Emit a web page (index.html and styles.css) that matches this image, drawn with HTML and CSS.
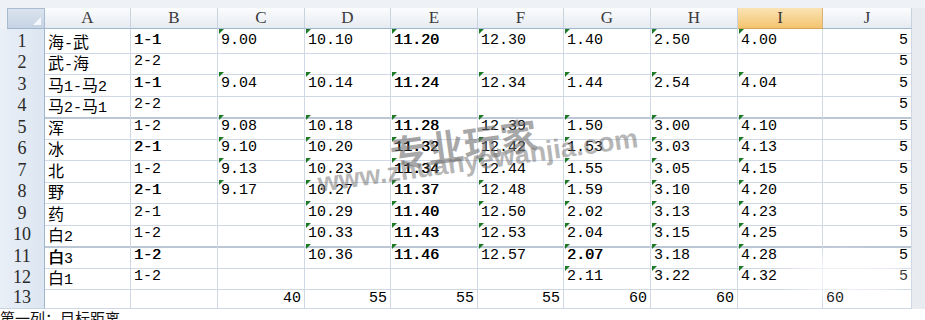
FILE: index.html
```html
<!DOCTYPE html>
<html lang="zh">
<head>
<meta charset="utf-8">
<link rel="stylesheet" href="styles.css">
</head>
<body>
<div class="sheet">
  <div class="topstrip"></div>
  <div class="row hdr">
    <div class="cornercell"><div class="corner"></div></div>
    <div class="ch">A</div><div class="ch">B</div><div class="ch">C</div><div class="ch">D</div><div class="ch">E</div><div class="ch">F</div><div class="ch">G</div><div class="ch">H</div><div class="ch sel">I</div><div class="ch">J</div><div class="gx"></div>
  </div>

  <div class="row t">
    <div class="rh">1</div>
    <div class="c"><span class="cj">海</span>-<span class="cj">武</span></div><div class="c b">1-1</div>
    <div class="c g">9.00</div><div class="c g">10.10</div><div class="c g b">11.20</div><div class="c g">12.30</div><div class="c g">1.40</div><div class="c g">2.50</div><div class="c g">4.00</div><div class="c r">5</div><div class="gx"></div>
  </div>
  <div class="row">
    <div class="rh">2</div>
    <div class="c"><span class="cj">武</span>-<span class="cj">海</span></div><div class="c">2-2</div>
    <div class="c"></div><div class="c"></div><div class="c"></div><div class="c"></div><div class="c"></div><div class="c"></div><div class="c"></div><div class="c r">5</div><div class="gx"></div>
  </div>
  <div class="row t">
    <div class="rh">3</div>
    <div class="c"><span class="cj">马</span>1-<span class="cj">马</span>2</div><div class="c b">1-1</div>
    <div class="c g">9.04</div><div class="c g">10.14</div><div class="c g b">11.24</div><div class="c g">12.34</div><div class="c g">1.44</div><div class="c g">2.54</div><div class="c g">4.04</div><div class="c r">5</div><div class="gx"></div>
  </div>
  <div class="row pb">
    <div class="rh">4</div>
    <div class="c"><span class="cj">马</span>2-<span class="cj">马</span>1</div><div class="c">2-2</div>
    <div class="c"></div><div class="c"></div><div class="c"></div><div class="c"></div><div class="c"></div><div class="c"></div><div class="c"></div><div class="c r">5</div><div class="gx"></div>
  </div>
  <div class="row t">
    <div class="rh">5</div>
    <div class="c"><span class="cj">浑</span></div><div class="c">1-2</div>
    <div class="c g">9.08</div><div class="c g">10.18</div><div class="c g b">11.28</div><div class="c g">12.39</div><div class="c g">1.50</div><div class="c g">3.00</div><div class="c g">4.10</div><div class="c r">5</div><div class="gx"></div>
  </div>
  <div class="row">
    <div class="rh">6</div>
    <div class="c"><span class="cj">冰</span></div><div class="c b">2-1</div>
    <div class="c g">9.10</div><div class="c g">10.20</div><div class="c g b">11.32</div><div class="c g">12.42</div><div class="c g">1.53</div><div class="c g">3.03</div><div class="c g">4.13</div><div class="c r">5</div><div class="gx"></div>
  </div>
  <div class="row t">
    <div class="rh">7</div>
    <div class="c"><span class="cj">北</span></div><div class="c">1-2</div>
    <div class="c g">9.13</div><div class="c g">10.23</div><div class="c g b">11.34</div><div class="c g">12.44</div><div class="c g">1.55</div><div class="c g">3.05</div><div class="c g">4.15</div><div class="c r">5</div><div class="gx"></div>
  </div>
  <div class="row">
    <div class="rh">8</div>
    <div class="c"><span class="cj">野</span></div><div class="c b">2-1</div>
    <div class="c g">9.17</div><div class="c g">10.27</div><div class="c g b">11.37</div><div class="c g">12.48</div><div class="c g">1.59</div><div class="c g">3.10</div><div class="c g">4.20</div><div class="c r">5</div><div class="gx"></div>
  </div>
  <div class="row t">
    <div class="rh">9</div>
    <div class="c"><span class="cj">药</span></div><div class="c">2-1</div>
    <div class="c"></div><div class="c g">10.29</div><div class="c g b">11.40</div><div class="c g">12.50</div><div class="c g">2.02</div><div class="c g">3.13</div><div class="c g">4.23</div><div class="c r">5</div><div class="gx"></div>
  </div>
  <div class="row pb">
    <div class="rh">10</div>
    <div class="c"><span class="cj">白</span>2</div><div class="c">1-2</div>
    <div class="c"></div><div class="c g">10.33</div><div class="c g b">11.43</div><div class="c g">12.53</div><div class="c g">2.04</div><div class="c g">3.15</div><div class="c g">4.25</div><div class="c r">5</div><div class="gx"></div>
  </div>
  <div class="row t">
    <div class="rh">11</div>
    <div class="c"><span class="cj b">白</span>3</div><div class="c b">1-2</div>
    <div class="c"></div><div class="c g">10.36</div><div class="c g b">11.46</div><div class="c g">12.57</div><div class="c g b">2.07</div><div class="c g">3.18</div><div class="c g">4.28</div><div class="c r">5</div><div class="gx"></div>
  </div>
  <div class="row">
    <div class="rh">12</div>
    <div class="c"><span class="cj">白</span>1</div><div class="c">1-2</div>
    <div class="c"></div><div class="c"></div><div class="c"></div><div class="c"></div><div class="c g">2.11</div><div class="c g">3.22</div><div class="c g">4.32</div><div class="c r">5</div><div class="gx"></div>
  </div>
  <div class="row t">
    <div class="rh">13</div>
    <div class="c"></div><div class="c"></div>
    <div class="c r">40</div><div class="c r">55</div><div class="c r">55</div><div class="c r">55</div><div class="c r">60</div><div class="c r">60</div><div class="c"></div><div class="c top">60</div><div class="gx"></div>
  </div>

  <div class="smudge"></div>
  <div class="wm">专业玩家</div>
  <div class="wm2">www.zhuanyewanjia.com</div>
</div>
<div class="note">第一列：目标距离</div>
</body>
</html>
```
FILE: styles.css
```css
html, body {
  margin: 0;
  padding: 0;
}
body {
  width: 925px;
  height: 320px;
  overflow: hidden;
  background: #ffffff;
  font-family: "Liberation Mono", "Noto Sans CJK SC", monospace;
  color: #000;
}
.sheet {
  position: relative;
}
.topstrip {
  height: 8px;
  background: #eef1f5;
}
.row {
  display: grid;
  grid-template-columns: 45px 86px 87px 87px 86px 87px 86px 87px 87px 85px 89px 13px;
  height: 21px;
}
.row.t {
  height: 22px;
}
.cornercell {
  background: #eef1f5;
  display: flex;
}
.corner {
  position: relative;
  margin-left: 7px;
  flex: 1;
  background: linear-gradient(#dbe4ef, #c6d3e3);
  border: 1px solid #a9bbd0;
  border-bottom-color: #9eb6ce;
}
.corner::after {
  content: "";
  position: absolute;
  right: 3px;
  bottom: 3px;
  border-left: 8px solid transparent;
  border-bottom: 8px solid #f4f7fb;
}
.ch {
  background: linear-gradient(#fbfcfd, #e6ebf1);
  border-right: 1px solid #c9d3df;
  border-bottom: 1px solid #9eb6ce;
  display: flex;
  align-items: center;
  justify-content: center;
  font-family: "Liberation Serif", serif;
  font-size: 17px;
  color: #3a3a3a;
  box-sizing: border-box;
}
.ch.sel {
  background: linear-gradient(#fbe3b4, #f3c470);
  border-bottom-color: #d7a35b;
  border-right-color: #d9b27a;
}
.gx {
  background: #e8ebf0;
}
.rh {
  background: linear-gradient(90deg, #e9eff7, #dde6f1);
  border-right: 1px solid #9eb6ce;
  border-bottom: 1px solid #c5d2e2;
  display: flex;
  align-items: center;
  justify-content: center;
  font-family: "Liberation Serif", serif;
  font-size: 18px;
  color: #2a2a2a;
  box-sizing: border-box;
}
.c {
  position: relative;
  border-right: 1px solid #d0d7e5;
  border-bottom: 1px solid #d0d7e5;
  box-sizing: border-box;
  padding: 3px 3px 0 3px;
  font-size: 15px;
  line-height: 16px;
  white-space: nowrap;
}
.row.t .c {
  padding-top: 4px;
}
.c.r {
  text-align: right;
}
.c.top {
  z-index: 2;
  color: #222;
}
.b {
  text-shadow: 0.6px 0 0 currentColor;
}
.cj {
  font-family: "Noto Sans CJK SC", sans-serif;
  font-size: 16px;
  line-height: 16px;
}
.c.g::before {
  content: "";
  position: absolute;
  left: 1px;
  top: 0;
  border-top: 5px solid #1d7b26;
  border-right: 5px solid transparent;
}
.row.pb .c,
.row.pb .rh {
  border-bottom: 2px solid #bcc7d6;
}
.smudge {
  position: absolute;
  left: 775px;
  top: 246px;
  width: 140px;
  height: 60px;
  z-index: 1;
  background: radial-gradient(ellipse at center, rgba(255,255,255,0.75) 0%, rgba(255,255,255,0.5) 45%, rgba(255,255,255,0) 72%);
}
.wm {
  position: absolute;
  left: 390px;
  top: 126px;
  z-index: 3;
  font-family: "Noto Sans CJK SC", sans-serif;
  font-size: 37px;
  font-weight: 700;
  color: rgba(110, 110, 110, 0.6);
  transform: rotate(-8deg);
  transform-origin: left center;
  white-space: nowrap;
}
.wm2 {
  position: absolute;
  left: 318px;
  top: 168px;
  z-index: 3;
  font-family: "Liberation Sans", sans-serif;
  font-size: 27px;
  font-weight: 700;
  color: rgba(110, 110, 110, 0.5);
  transform: rotate(-8deg);
  transform-origin: left center;
  white-space: nowrap;
}
.note {
  font-family: "Noto Sans CJK SC", sans-serif;
  font-size: 15px;
  line-height: 18px;
  color: #111;
}
```
